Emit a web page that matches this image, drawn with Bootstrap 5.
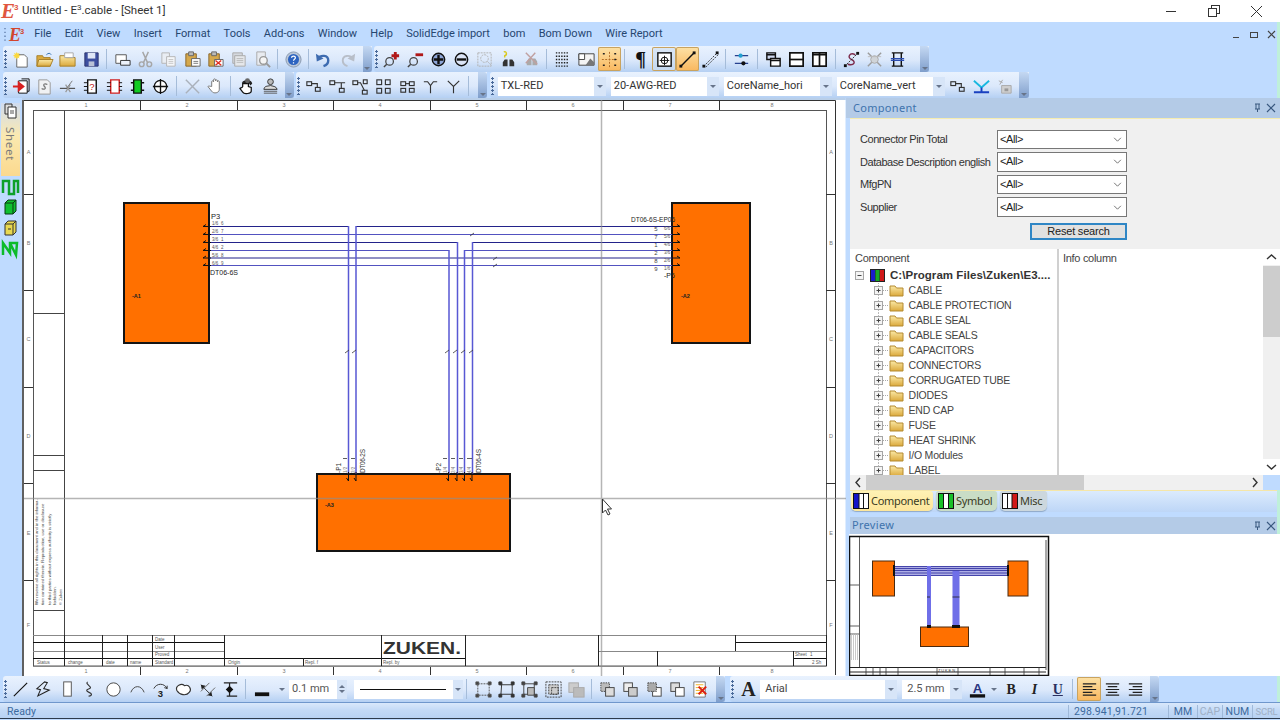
<!DOCTYPE html>
<html lang="en">
<head>
<meta charset="utf-8">
<title>Untitled - E3.cable - [Sheet 1]</title>
<link href="https://cdn.jsdelivr.net/npm/bootstrap@5.3.0/dist/css/bootstrap.min.css" rel="stylesheet">
<style>
html,body{width:1280px;height:720px;overflow:hidden;margin:0;background:#bfdbff}
body{font-family:Roboto,"Liberation Sans",sans-serif;font-size:11px;color:#222}
.app{width:1280px;height:720px}
.titlebar{height:22px;background:#fff;font-size:11.5px;color:#333;flex:none}
.logo{width:22px;height:22px;flex:none}
.winbtn{width:43px;display:flex;justify-content:center;align-items:center;height:19px}
.menubar{height:24px;background:#bfdbff;flex:none;padding-left:27.5px}
.menubar .mi{padding:0 6.65px;color:#26466f;font-size:11px;white-space:nowrap}
.mdi{width:45px;color:#3a5680;font-size:10px}
.tbrow{height:26px;background:#bfdbff;flex:none}
.tbar{height:26px;background:linear-gradient(#e9f2fe,#dbe8fb 55%,#b5d0f3);border-radius:3px 0 0 3px;flex:none}
.grip{width:6.5px;height:18px;flex:none;background:radial-gradient(circle at 1.5px 1.5px,#4a6a9a 1px,transparent 1.2px) 1px 0/3px 4px repeat-y}
.tbk{width:23.3px;height:24px;flex:none;display:flex;align-items:center;justify-content:center;border-radius:2px}
.tbk>svg{width:19px;height:19px}
.tbk.on{background:linear-gradient(#fde2a6,#f9b75e);box-shadow:inset 0 0 0 1px #c9a35f}
.tbk.on2{background:linear-gradient(#dbe7f5,#c4d8f0);box-shadow:inset 0 0 0 1px #c9a35f}
.tbsep{width:8px;height:20px;flex:none}
.tbsep::after{content:"";display:block;width:1px;height:20px;margin-left:3px;background:#a5bcd9}
.tbend{width:9px;height:26px;flex:none;background:linear-gradient(#c4d8f2,#7f9ecb);border-radius:0 3px 3px 0;display:flex;align-items:flex-end;justify-content:center;padding-bottom:2px}
.combo{height:19px;background:#fff;flex:none;font-size:11px;color:#333;padding-left:3px;white-space:nowrap;overflow:hidden}
.combo .drop{margin-left:auto;width:12px;height:19px;background:#d7e5f8;display:flex;align-items:center;justify-content:center;flex:none}
.tri{width:0;height:0;border-left:3px solid transparent;border-right:3px solid transparent;border-top:3px solid #67748a;display:block}
.shift .tbk,.shift .combo,.shift .grip,.shift .tbsep{margin-top:2px}
.mainrow{height:578px;flex:none}
.sidebar{width:22px;background:#bfdbff;flex:none}
.sheettab{width:19px;height:73px;margin:5px 0 0 1px;background:linear-gradient(#d0dcf0,#fbe9b0 45%,#fbd98e)}
.sheettab span{writing-mode:vertical-rl;font-family:"Noto Sans",sans-serif;font-size:11.5px;color:#7a7a7a;letter-spacing:.7px;display:block;margin:8px 0 0 1px}
.dwg{width:824px;height:578px;display:block;flex:none;background:#bfdbff}
.rpanel{width:434px;background:#bfdbff;flex:none;position:relative}
.phead{height:20px;background:#b4cbe7;color:#3f73ad;font-size:11px;padding:0 4px 0 7px;flex:none;letter-spacing:.3px;font-family:"Noto Sans",sans-serif}
.phead.second{height:17px;margin-left:4px;padding-left:2px}
.filters{height:131px;margin-left:4px;background:#f0f0f0;border-top:1px solid #f5ecb0;flex:none;padding:10.5px 0 0 10px;font-family:"Liberation Sans",sans-serif;font-size:11px;letter-spacing:-.45px;color:#333}
.frow{height:19.6px;margin-bottom:3px}
.frow label{width:137px;flex:none;white-space:nowrap}
.fsel.form-select{width:130px;height:19.6px;min-height:0;padding:0 0 0 2px;font-size:11px;letter-spacing:-.4px;line-height:1;border:1px solid #777;border-radius:0;background-position:right 3px center;background-size:11px 9px;background-image:url("data:image/svg+xml,%3csvg xmlns='http://www.w3.org/2000/svg' viewBox='0 0 16 16'%3e%3cpath fill='none' stroke='%23666' stroke-width='1.6' d='M2 5l6 6 6-6'/%3e%3c/svg%3e");color:#222;box-shadow:inset 0 0 0 1px #fff;font-family:"Liberation Sans",sans-serif}
.rbtn.btn{width:97px;height:17px;margin:6px 0 0 170px;padding:0;font-size:11px;letter-spacing:-.2px;line-height:1;border-radius:0;background:#e1e1e1;border:2px solid #2f86c5;color:#222;font-family:"Liberation Sans",sans-serif;display:block}
.treebox{height:226px;margin-left:4px;background:#fff;font-family:"Liberation Sans",sans-serif;font-size:10.5px;letter-spacing:-.2px;color:#444;flex:none}
.col1{width:207px;flex:none;overflow:hidden;border-right:2px solid #d0d0d0;box-sizing:content-box}
.col2{width:204px;flex:none}
.thead{height:19px;padding:0 0 1px 5px;color:#444;font-size:11px;letter-spacing:-.3px;flex:none}
.col2 .thead{padding-left:4px}
.trow{height:15px;white-space:nowrap;flex:none}
.trow.it{padding-left:21.5px}
.trow svg{flex:none}
.trootname{font-size:11.5px;letter-spacing:.05px;margin-left:2px;color:#333;font-weight:700}
.vscroll{width:17px;background:#f0f0f0;flex:none;position:relative}
.vscroll i{position:absolute;left:0;right:0;top:17px;height:71px;background:#cdcdcd}
.sarrow{height:16px;display:flex;align-items:center;justify-content:center;background:#fff}
.hrail{height:15px;margin-left:4px;margin-right:17px;background:#f0f0f0;flex:none;position:relative;color:#444}
.hrail i{position:absolute;left:16px;width:218px;top:0;bottom:0;background:#cdcdcd}
.tabs{height:22px;margin-left:4px;background:linear-gradient(#dcebfd,#bdd6f7);border-top:1px solid #f5e6a8;padding-left:1px;gap:3px;flex:none;font-size:11px;font-family:"Noto Sans",sans-serif;letter-spacing:-.3px}
.tabi{height:20px;border-radius:3px 3px 5px 5px;padding:0 0 0 2px;gap:2px;color:#3b3b1e;box-shadow:0 1px 1px #8ea8c7}
.tabi.a{width:82px;background:linear-gradient(#fff2b4,#fde69b)}
.tabi.b{width:61px;background:#c9ddc6}
.tabi.c{width:47px;background:#ccd7dd}
.gapb{height:5px;flex:none}
.prevpane{height:142px;margin-left:3px;background:#fff;flex:none}
.mini{width:201px;height:141px;display:block;margin-top:1px}
.botbar{height:27px;background:#bfdbff;flex:none;position:relative;border-bottom:1px solid #6f97cc}
.status{height:16px;flex:none;background:linear-gradient(#d9e8fb,#c2d9f6 50%,#b8d2f3);color:#3c6a9e;font-size:10.5px;border-bottom:1px solid #2c3a4c;padding:2px 0 0 7px;position:relative;letter-spacing:.1px}
.sc{border-left:1px solid #9fb9d9;text-align:center;height:13px;line-height:13px;flex:none;white-space:nowrap}
.edge{position:absolute;right:0;width:3px;background:#bff0da}
</style>
</head>
<body>
<svg width="0" height="0" class="position-absolute" aria-hidden="true">
<defs>
<linearGradient id="fo" x1="0" y1="0" x2="0" y2="1"><stop offset="0" stop-color="#fbe9a6"/><stop offset="1" stop-color="#dba93c"/></linearGradient>
<symbol id="new" viewBox="0 0 20 20"><path d="M5 5h8l3 3v10H5z" fill="#fff" stroke="#666"/><path d="M5 2l1 2 2-1-1 2 2 1-2 1 1 2-2-1-1 2-1-2-2 1 1-2-2-1 2-1-1-2 2 1z" fill="#fbd83c"/></symbol>
<symbol id="open" viewBox="0 0 20 20"><path d="M2 6h6l1 2h7v9H2z" fill="#d9a93f" stroke="#a77f2a"/><path d="M4 10h15l-3 7H2z" fill="url(#fo)" stroke="#a77f2a"/><path d="M12 5c2-2 4-2 5 0" fill="none" stroke="#2f6fb0"/></symbol>
<symbol id="fold" viewBox="0 0 20 20"><path d="M2 6h6l1 2h9v9H2z" fill="url(#fo)" stroke="#a77f2a"/><path d="M7 3h9v5H7z" fill="#fff" stroke="#aaa"/></symbol>
<symbol id="save" viewBox="0 0 20 20"><path d="M3 3h14v14H3z" fill="#3d4fa0" stroke="#2b336d"/><path d="M6 3h8v6H6z" fill="#dfe6f6"/><path d="M7 12h6v5H7z" fill="#b9c1d6"/></symbol>
<symbol id="win" viewBox="0 0 20 20"><path d="M3 5h11v9H3z" fill="#fff" stroke="#555"/><path d="M8 11h10v5H8z" fill="#eef3fb" stroke="#333"/></symbol>
<symbol id="cut" viewBox="0 0 20 20" fill="none" stroke="#a6a6a6" stroke-width="1.5"><path d="M7 2l5 11M13 2L8 13"/><circle cx="6" cy="15" r="2.5"/><circle cx="14" cy="15" r="2.5"/></symbol>
<symbol id="copy" viewBox="0 0 20 20"><path d="M3 3h8v11H3z" fill="#e9edf3" stroke="#b5b5b5"/><path d="M8 7h9v10H8z" fill="#f4f6f9" stroke="#b5b5b5"/><path d="M10 10h5M10 12h5M10 14h5" stroke="#c5c5c5"/></symbol>
<symbol id="paste" viewBox="0 0 20 20"><path d="M3 4h11v13H3z" fill="#d5a84c" stroke="#87652a"/><path d="M6 2h5v4H6z" fill="#bbb" stroke="#666"/><path d="M9 9h9v8H9z" fill="#fff" stroke="#666"/><path d="M11 12h5M11 14h5" stroke="#777"/></symbol>
<symbol id="paster" viewBox="0 0 20 20"><path d="M3 4h11v13H3z" fill="#d5a84c" stroke="#87652a"/><path d="M6 2h5v4H6z" fill="#bbb" stroke="#666"/><path d="M9 10h9v7H9z" fill="#fff" stroke="#666"/><path d="M10 16l6-5M10 11l6 5" stroke="#e03020" stroke-width="1.5"/></symbol>
<symbol id="stack" viewBox="0 0 20 20"><path d="M4 3h10v11H4z" fill="#d5d9df" stroke="#aaa"/><path d="M6 6h11v11H6z" fill="#e5e7ea" stroke="#aaa"/><path d="M8 9h7M8 11h7M8 13h7" stroke="#bbb"/></symbol>
<symbol id="docz" viewBox="0 0 20 20"><path d="M4 2h9v14H4z" fill="#e8ebf0" stroke="#aaa"/><circle cx="11" cy="11" r="4" fill="#f5f5f5" stroke="#999" stroke-width="1.5"/><path d="M14 14l4 4" stroke="#999" stroke-width="2"/></symbol>
<symbol id="help" viewBox="0 0 20 20"><circle cx="10" cy="10" r="8" fill="#b9c6d8" stroke="#8a9ab0"/><circle cx="10" cy="10" r="5.800" fill="#2c63c0"/><path d="M8 8.200c0-2.500 4-2.500 4 0 0 1.500-2 1.500-2 3M10 13v1.300" fill="none" stroke="#fff" stroke-width="1.300"/></symbol>
<symbol id="undo" viewBox="0 0 20 20"><path d="M4 9c3-4 11-4 11 2 0 3-2 5-5 6" fill="none" stroke="#3d6bb0" stroke-width="2.500"/><path d="M2 4l1 8 7-3z" fill="#3d6bb0"/></symbol>
<symbol id="redo" viewBox="0 0 20 20"><path d="M16 9c-3-4-11-4-11 2 0 3 2 5 5 6" fill="none" stroke="#b8bec8" stroke-width="2"/><path d="M18 4l-1 8-7-3z" fill="#b8bec8"/></symbol>
<symbol id="zp" viewBox="0 0 20 20"><circle cx="8" cy="12" r="4" fill="none" stroke="#444" stroke-width="1.300"/><path d="M5 15l-3 3" stroke="#444" stroke-width="1.500"/><path d="M14 2v8M10 6h8" stroke="#b01818" stroke-width="3"/></symbol>
<symbol id="zm" viewBox="0 0 20 20"><circle cx="8" cy="12" r="4" fill="none" stroke="#444" stroke-width="1.300"/><path d="M5 15l-3 3" stroke="#444" stroke-width="1.500"/><path d="M10 5h8" stroke="#b01818" stroke-width="3"/></symbol>
<symbol id="cp" viewBox="0 0 20 20"><circle cx="10" cy="10" r="6.500" fill="#8ea6d8" stroke="#111" stroke-width="1.500"/><path d="M10 5v10M5 10h10" stroke="#111" stroke-width="2.500"/></symbol>
<symbol id="cm" viewBox="0 0 20 20"><circle cx="10" cy="10" r="6.500" fill="#dbe4f6" stroke="#111" stroke-width="1.500"/><path d="M5 10h10" stroke="#111" stroke-width="2.500"/></symbol>
<symbol id="zf" viewBox="0 0 20 20" fill="none" stroke="#b0b0b0" stroke-dasharray="2 1"><rect x="3" y="3" width="14" height="14"/><circle cx="10" cy="9" r="4"/><path d="M13 12l4 4"/></symbol>
<symbol id="bin" viewBox="0 0 20 20"><path d="M6 10h3v7H4v-4zM11 10h3l2 3v4h-5z" fill="#333"/><path d="M5 2c3-1 4 3 1 4v2" fill="none" stroke="#d8c820" stroke-width="1.500"/></symbol>
<symbol id="binx" viewBox="0 0 20 20"><path d="M7 9h3v7H5v-4zM11 9h3l2 3v4h-5z" fill="#aaa"/><path d="M4 3l12 12M14 3L4 14" stroke="#c0a0a0" stroke-width="1.500"/></symbol>
<symbol id="dots" viewBox="0 0 20 20"><path d="M3 3h14M3 6.500h14M3 10h14M3 13.500h14M3 17h14" stroke="#222" stroke-width="1.500" stroke-dasharray="1.500 1.300"/></symbol>
<symbol id="img" viewBox="0 0 20 20"><path d="M2 4h16v12H2z" fill="#f4f4f4" stroke="#444"/><path d="M9 16l5-7 4 4v3z" fill="#777"/><path d="M2 4h6v6H2z" fill="#fff" stroke="#444"/></symbol>
<symbol id="snap" viewBox="0 0 20 20"><path d="M10 2v16M2 10h16" stroke="#b06a24" stroke-dasharray="2 1.500"/><path d="M3 4h2M15 4h2M3 16h2M15 16h2M15 10h2" stroke="#222" stroke-width="1.500"/></symbol>
<symbol id="box1" viewBox="0 0 20 20"><rect x="3" y="3" width="14" height="14" fill="#fff" stroke="#111" stroke-width="1.500"/><circle cx="10" cy="11" r="3.500" fill="none" stroke="#111"/><path d="M10 6v10M5 11h10" stroke="#111"/></symbol>
<symbol id="ln" viewBox="0 0 20 20"><path d="M3 17L17 3" stroke="#111" stroke-width="1.500"/><rect x="1.500" y="15.500" width="3" height="3" fill="#111"/><rect x="15.500" y="1.500" width="3" height="3" fill="#111"/></symbol>
<symbol id="lnd" viewBox="0 0 20 20"><path d="M3 17L17 3M5 18L18 5" stroke="#333" stroke-dasharray="2 1.300"/><rect x="1.500" y="15.500" width="3" height="3" fill="#111"/><rect x="15.500" y="1.500" width="3" height="3" fill="#111"/></symbol>
<symbol id="bl" viewBox="0 0 20 20"><path d="M3 6h14M3 14h14" stroke="#27408f" stroke-width="1.300"/><circle cx="9" cy="6" r="2.200" fill="#23a0d0"/><circle cx="12" cy="14" r="2.200" fill="#111"/></symbol>
<symbol id="wst" viewBox="0 0 20 20"><path d="M3 3h9v7H3z" fill="#cfd9f0" stroke="#111" stroke-width="1.500"/><path d="M7 9h10v8H7z" fill="#fff" stroke="#111" stroke-width="1.500"/><path d="M3 5h9M7 11h10" stroke="#111" stroke-width="1.500"/></symbol>
<symbol id="wh" viewBox="0 0 20 20"><rect x="3" y="3" width="14" height="14" fill="#fff" stroke="#111" stroke-width="1.800"/><path d="M3 10h14" stroke="#111" stroke-width="1.800"/></symbol>
<symbol id="wv" viewBox="0 0 20 20"><rect x="3" y="3" width="14" height="14" fill="#fff" stroke="#111" stroke-width="1.800"/><path d="M10 3v14M3 5h14" stroke="#111" stroke-width="1.800"/></symbol>
<symbol id="sg" viewBox="0 0 20 20"><path d="M14 5C8 2 5 8 10 10s3 7-4 5" fill="none" stroke="#7c2a4a" stroke-width="1.500"/><path d="M3 17L17 3" stroke="#333" stroke-dasharray="2 1"/><rect x="15" y="2" width="3" height="3" fill="#111"/><rect x="2" y="15" width="3" height="3" fill="#111"/></symbol>
<symbol id="xg" viewBox="0 0 20 20"><path d="M3 3l14 14M17 3L3 17" stroke="#9c9c9c" stroke-width="1.500"/><circle cx="10" cy="10" r="4" fill="#d0d4d8" stroke="#aaa"/><path d="M3 7h14" stroke="#bbb"/></symbol>
<symbol id="hfr" viewBox="0 0 20 20"><path d="M4 3h12M4 17h12M6 3v14M14 3v14" stroke="#111" stroke-width="1.500"/><path d="M3 9h14M3 11h14" stroke="#2b4cb0" stroke-width="1.300"/></symbol>
<symbol id="ra" viewBox="0 0 20 20"><path d="M7 4h9v13H7z" fill="#fff" stroke="#111"/><path d="M10 2h8v13h-2" fill="none" stroke="#111"/><path d="M1 10h6M7 6l5 4-5 4z" fill="#d82020" stroke="#d82020" stroke-width="2"/></symbol>
<symbol id="docs" viewBox="0 0 20 20"><path d="M4 3h9l3 3v12H4z" fill="#f0f1f3" stroke="#999"/><path d="M13 8c-3-2-5 0-3 2s0 4-3 2" fill="none" stroke="#777" stroke-width="1.300"/></symbol>
<symbol id="xl" viewBox="0 0 20 20"><path d="M2 12h16" stroke="#555" stroke-width="1.300"/><path d="M8 8l5 8M13 8l-5 8" stroke="#999" stroke-width="1.300"/><path d="M15 4l-6 8" stroke="#777"/></symbol>
<symbol id="q" viewBox="0 0 20 20"><path d="M6 3h9v14H6z" fill="#fff" stroke="#111" stroke-width="1.500"/><path d="M2 6h4M2 10h4M2 14h4" stroke="#111"/><text x="10.500" y="14" font-size="10" fill="#c02020" text-anchor="middle" font-family="Liberation Sans">?</text></symbol>
<symbol id="chipr" viewBox="0 0 20 20"><path d="M6 3h9v14H6z" fill="#fff" stroke="#d02020" stroke-width="1.500"/><path d="M2 6h4M2 10h4M2 14h4M15 6h3M15 10h3M15 14h3" stroke="#111"/></symbol>
<symbol id="chipg" viewBox="0 0 20 20"><path d="M6 3h8v14H6z" fill="#11cc22" stroke="#111" stroke-width="1.500"/><path d="M3 6h3M3 14h3M14 6h3M14 14h3" stroke="#111" stroke-width="1.500"/></symbol>
<symbol id="cross" viewBox="0 0 20 20"><circle cx="10" cy="10" r="6.500" fill="#fff" stroke="#111" stroke-width="1.400"/><path d="M10 2v16M2 10h16" stroke="#111" stroke-width="1.400"/></symbol>
<symbol id="bigx" viewBox="0 0 20 20"><path d="M3 3l14 14M17 3L3 17" stroke="#aab1bb" stroke-width="1.500"/></symbol>
<symbol id="hand" viewBox="0 0 20 20"><path d="M6 10V5a1 1 0 0 1 2 0V3a1 1 0 0 1 2 0v1a1 1 0 0 1 2 0v1a1 1 0 0 1 2 0v8c0 4-6 5-8 2l-4-5c1-1 3 0 4 0z" fill="#fff" stroke="#777"/></symbol>
<symbol id="handd" viewBox="0 0 20 20"><path d="M5 6c3-5 11-3 11 1l-2 2-1-2z" fill="#222"/><path d="M6 10V7h6v3l3 1v4c0 2-7 4-9 1l-3-4c1-1 2 0 3-2z" fill="#fff" stroke="#111" stroke-width="1.300"/><circle cx="11" cy="4" r="2.600" fill="#666"/></symbol>
<symbol id="pers" viewBox="0 0 20 20"><circle cx="10" cy="5" r="3" fill="#bbb" stroke="#333"/><path d="M3 13c1-4 3-3 7-4 4 1 6 1 7 4z" fill="#ddd" stroke="#333"/><path d="M3 15h14M3 17h14" stroke="#555"/></symbol>
<symbol id="l1" viewBox="0 0 20 20" fill="none" stroke="#333" stroke-width="1.200"><rect x="3" y="5" width="5" height="4"/><rect x="12" y="11" width="5" height="4"/><path d="M8 7h6v4"/></symbol>
<symbol id="l2" viewBox="0 0 20 20" fill="none" stroke="#333" stroke-width="1.200"><rect x="2" y="4" width="5" height="4"/><rect x="12" y="12" width="5" height="4"/><path d="M7 6h11M14 6v6"/></symbol>
<symbol id="l3" viewBox="0 0 20 20" fill="none" stroke="#333" stroke-width="1.200"><rect x="2" y="4" width="5" height="4"/><rect x="13" y="3" width="4" height="4"/><rect x="12" y="14" width="5" height="4"/><path d="M7 6h3l4 8"/></symbol>
<symbol id="l4" viewBox="0 0 20 20" fill="none" stroke="#333" stroke-width="1.200"><rect x="3" y="3" width="5" height="5"/><rect x="12" y="3" width="5" height="5"/><rect x="3" y="12" width="5" height="5"/><rect x="12" y="12" width="5" height="5"/></symbol>
<symbol id="l5" viewBox="0 0 20 20" fill="none" stroke="#333" stroke-width="1.200"><rect x="3" y="5" width="5" height="4"/><rect x="12" y="5" width="5" height="4"/><rect x="3" y="12" width="5" height="4"/><rect x="12" y="12" width="5" height="4"/><path d="M8 7h4"/></symbol>
<symbol id="y1" viewBox="0 0 20 20" fill="none" stroke="#333" stroke-width="1.200"><path d="M3 5h4l3 4 3-4h4M10 9v8"/></symbol>
<symbol id="y2" viewBox="0 0 20 20" fill="none" stroke="#333" stroke-width="1.200"><path d="M4 4l6 6 6-6M10 10v7"/></symbol>
<symbol id="cy" viewBox="0 0 20 20"><path d="M2 4l8 7 8-7" fill="none" stroke="#18b8e0" stroke-width="2"/><path d="M10 11v5M2 16h16" stroke="#1840c0" stroke-width="2"/></symbol>
<symbol id="gr" viewBox="0 0 20 20"><path d="M4 4l4 2M8 3l-3 5M7 9h10v8H7z" fill="#cfcfcf" stroke="#a9a9a9"/><path d="M10 12h4v3h-4z" fill="#999"/></symbol>
<symbol id="dl" viewBox="0 0 20 20"><path d="M3 17L17 3" stroke="#111" stroke-width="1.200"/></symbol>
<symbol id="zz" viewBox="0 0 20 20" fill="none" stroke="#222" stroke-width="1.100"><path d="M9 2L3 11h4l-1 7 10-9h-6l2-7z" transform="rotate(15 10 10)"/></symbol>
<symbol id="rc" viewBox="0 0 20 20"><rect x="6" y="2" width="8" height="15" fill="#fff" stroke="#555"/></symbol>
<symbol id="sq" viewBox="0 0 20 20" fill="none" stroke="#333" stroke-width="1.200"><path d="M7 2c-3 2 3 4 3 6s-4 1-4 3 5 2 5 4-2 2-3 2"/></symbol>
<symbol id="cir" viewBox="0 0 20 20"><circle cx="10" cy="10" r="7" fill="#fff" stroke="#444"/></symbol>
<symbol id="arc" viewBox="0 0 20 20"><path d="M3 13c3-8 11-8 14 0" fill="none" stroke="#444"/></symbol>
<symbol id="arc3" viewBox="0 0 20 20"><path d="M3 9c3-6 11-6 14 0" fill="none" stroke="#333"/><path d="M14 8l3 1 0-3" fill="none" stroke="#333"/><text x="10" y="18" font-size="10" font-weight="700" font-family="Liberation Sans" text-anchor="middle" fill="#222">3</text></symbol>
<symbol id="cl" viewBox="0 0 20 20"><path d="M3 11c-2-5 5-8 8-5 5-2 8 4 5 7-3 4-10 3-13-2z" fill="#fff" stroke="#333" stroke-width="1.200"/></symbol>
<symbol id="dm" viewBox="0 0 20 20"><path d="M3 5l12 12" stroke="#333"/><path d="M3 5l5 1-4 4zM15 17l-5-1 4-4z" fill="#222"/><path d="M3 12L12 3M9 17l9-9" stroke="#666"/></symbol>
<symbol id="dv" viewBox="0 0 20 20"><path d="M3 3h14M6 17h11M9 3v14" stroke="#222" stroke-width="1.300"/><path d="M9 6L5 10h8zM9 14l-4-4h8z" fill="#111"/></symbol>
<symbol id="lw" viewBox="0 0 20 20"><rect x="1" y="13" width="15" height="4" fill="#111"/></symbol>
<symbol id="g1" viewBox="0 0 20 20" fill="none" stroke="#555"><rect x="4" y="4" width="12" height="12" stroke-dasharray="2 1"/><path d="M2 2h3v3H2zM15 2h3v3h-3zM2 15h3v3H2zM15 15h3v3h-3z" fill="#444"/></symbol>
<symbol id="g2" viewBox="0 0 20 20" fill="none" stroke="#333"><path d="M5 3l-1 14M16 3v14M3 5h14M3 15h14"/><path d="M2 2h3v3H2zM15 2h3v3h-3zM2 15h3v3H2zM15 15h3v3h-3z" fill="#333"/></symbol>
<symbol id="g3" viewBox="0 0 20 20" fill="none" stroke="#444"><rect x="4" y="4" width="11" height="11"/><path d="M8 8h7v8H8z" fill="#bbb"/><path d="M2 2h3v3H2zM15 2h3v3h-3zM2 15h3v3H2zM15 15h3v3h-3z" fill="#444"/></symbol>
<symbol id="g4" viewBox="0 0 20 20" fill="none" stroke="#444" stroke-dasharray="2 1"><rect x="2" y="2" width="16" height="16"/><rect x="5" y="5" width="10" height="10" fill="#ccc"/><path d="M8 8h7v7H8z"/></symbol>
<symbol id="g5" viewBox="0 0 20 20" fill="#ccc" stroke="#aaa"><rect x="2" y="3" width="10" height="10"/><rect x="7" y="8" width="11" height="10" fill="#bbb"/></symbol>
<symbol id="o1" viewBox="0 0 20 20"><rect x="3" y="3" width="9" height="9" fill="#bbb" stroke="#444" stroke-dasharray="1.500 1"/><rect x="8" y="8" width="9" height="9" fill="#ddd" stroke="#444"/></symbol>
<symbol id="o2" viewBox="0 0 20 20"><rect x="3" y="3" width="9" height="9" fill="#eee" stroke="#444"/><rect x="8" y="8" width="9" height="9" fill="#ccc" stroke="#444"/></symbol>
<symbol id="o3" viewBox="0 0 20 20"><rect x="8" y="8" width="9" height="9" fill="#fff" stroke="#444"/><rect x="3" y="3" width="9" height="9" fill="#aaa" stroke="#444" stroke-dasharray="1.500 1"/></symbol>
<symbol id="o4" viewBox="0 0 20 20"><rect x="3" y="3" width="9" height="9" fill="#ddd" stroke="#444"/><rect x="8" y="8" width="9" height="9" fill="#fff" stroke="#444"/></symbol>
<symbol id="edt" viewBox="0 0 20 20"><path d="M3 2h12v16H3z" fill="#fff" stroke="#777"/><path d="M5 5h8M5 8h8M5 11h8M5 14h8" stroke="#f0b020"/><path d="M8 7l8 8M16 7l-8 8" stroke="#dd2010" stroke-width="2"/></symbol>
<symbol id="lt" viewBox="0 0 20 20"><path d="M3 4h14M3 7h10M3 10h14M3 13h10M3 16h14" stroke="#222" stroke-width="1.300"/></symbol>
<symbol id="ct" viewBox="0 0 20 20"><path d="M3 4h14M5 7h10M3 10h14M5 13h10M3 16h14" stroke="#222" stroke-width="1.300"/></symbol>
<symbol id="rt" viewBox="0 0 20 20"><path d="M3 4h14M7 7h10M3 10h14M7 13h10M3 16h14" stroke="#222" stroke-width="1.300"/></symbol>
<symbol id="tree" viewBox="0 0 37 15"><path d="M6.500 0v15" stroke="#bbb" stroke-dasharray="1 1"/><path d="M11 7.500h5" stroke="#aaa" stroke-dasharray="1 1"/><rect x="2.500" y="3.500" width="8" height="8" fill="#f4f4f4" stroke="#a5a5a5"/><path d="M4.500 7.500h4M6.500 5.500v4" stroke="#444"/><path d="M18 3h5l1.500 2H31v8H18z" fill="url(#fo)" stroke="#b48a30"/></symbol>
</defs>
</svg>
<div class="app d-flex flex-column">
  <div class="titlebar d-flex align-items-center">
    <svg class="logo" viewBox="0 0 22 22"><text x="1" y="18" font-family="Liberation Serif" font-style="italic" font-weight="700" font-size="21" fill="#e0563f">E</text><text x="14" y="10" font-family="Liberation Sans" font-weight="700" font-size="8" fill="#e0563f">3</text></svg>
    <span class="text-nowrap">Untitled - E<sup style="font-size:8px">3</sup>.cable - [Sheet 1]</span>
    <div class="ms-auto d-flex" style="margin-right:2px">
      <span class="winbtn"><svg width="12" height="12"><path d="M1 6.500h10" stroke="#333"/></svg></span>
      <span class="winbtn"><svg width="12" height="12" fill="#fff" stroke="#333"><rect x="3.500" y=".5" width="8" height="8"/><rect x=".5" y="3.500" width="8" height="8"/></svg></span>
      <span class="winbtn"><svg width="13" height="13"><path d="M1 1l11 11M12 1L1 12" stroke="#333"/></svg></span>
    </div>
  </div>
  <div class="menubar d-flex align-items-center position-relative">
    <svg class="position-absolute" style="left:3px;top:2px" width="24" height="20" viewBox="0 0 24 20"><path d="M2 4v14" stroke="#5a78a5" stroke-width="1.300" stroke-dasharray="1.300 2.500"/><text x="6" y="17" font-family="Liberation Serif" font-style="italic" font-weight="700" font-size="18" fill="#d2452e">E</text><text x="17" y="10" font-family="Liberation Sans" font-weight="700" font-size="7.500" fill="#d2452e">3</text></svg>
    <span class="mi">File</span><span class="mi">Edit</span><span class="mi">View</span><span class="mi">Insert</span><span class="mi">Format</span><span class="mi">Tools</span><span class="mi">Add-ons</span><span class="mi">Window</span><span class="mi">Help</span><span class="mi">SolidEdge import</span><span class="mi">bom</span><span class="mi">Bom Down</span><span class="mi">Wire Report</span>
    <div class="ms-auto d-flex justify-content-between align-items-center mdi" style="margin-right:3px">
      <svg width="9" height="9"><path d="M1 7.500h6" stroke="#444"/></svg>
      <svg width="10" height="9" fill="none" stroke="#444"><rect x="1.500" y="2.500" width="7" height="5"/></svg>
      <svg width="10" height="9"><path d="M1 1l7 7M8 1L1 8" stroke="#444" stroke-width="1.200"/></svg>
    </div>
    <span class="edge" style="top:0;bottom:-52px"></span>
  </div>
  <div class="tbrow d-flex">
    <div class="tbar d-flex align-items-center" style="margin-left:3px">
      <span class="grip"></span>
      <span class="tbk"><svg><use href="#new"/></svg></span><span class="tbk"><svg><use href="#open"/></svg></span><span class="tbk"><svg><use href="#fold"/></svg></span><span class="tbk"><svg><use href="#save"/></svg></span>
      <span class="tbsep"></span>
      <span class="tbk"><svg><use href="#win"/></svg></span><span class="tbk"><svg><use href="#cut"/></svg></span><span class="tbk"><svg><use href="#copy"/></svg></span><span class="tbk"><svg><use href="#paste"/></svg></span><span class="tbk"><svg><use href="#paster"/></svg></span><span class="tbk"><svg><use href="#stack"/></svg></span><span class="tbk"><svg><use href="#docz"/></svg></span>
      <span class="tbsep"></span>
      <span class="tbk"><svg><use href="#help"/></svg></span>
      <span class="tbsep" style="width:7px"></span>
      <span class="tbk"><svg><use href="#undo"/></svg></span><span class="tbk"><svg><use href="#redo"/></svg></span>
      <span class="tbend" style="margin-left:4px"><span class="tri"></span></span>
    </div>
    <div class="tbar d-flex align-items-center" style="margin-left:2px">
      <span class="grip"></span>
      <span class="tbk"><svg><use href="#zp"/></svg></span><span class="tbk"><svg><use href="#zm"/></svg></span><span class="tbk"><svg><use href="#cp"/></svg></span><span class="tbk"><svg><use href="#cm"/></svg></span><span class="tbk"><svg><use href="#zf"/></svg></span><span class="tbk"><svg><use href="#bin"/></svg></span><span class="tbk"><svg><use href="#binx"/></svg></span>
      <span class="tbsep"></span>
      <span class="tbk"><svg><use href="#dots"/></svg></span><span class="tbk"><svg><use href="#img"/></svg></span><span class="tbk on"><svg><use href="#snap"/></svg></span>
      <span class="tbsep"></span>
      <span class="tbk fs-5 fw-bold" style="color:#111;font-family:'Liberation Serif',serif">¶</span><span class="tbk on2"><svg><use href="#box1"/></svg></span><span class="tbk on"><svg><use href="#ln"/></svg></span><span class="tbk"><svg><use href="#lnd"/></svg></span>
      <span class="tbsep"></span>
      <span class="tbk"><svg><use href="#bl"/></svg></span>
      <span class="tbsep"></span>
      <span class="tbk"><svg><use href="#wst"/></svg></span><span class="tbk"><svg><use href="#wh"/></svg></span><span class="tbk"><svg><use href="#wv"/></svg></span>
      <span class="tbsep"></span>
      <span class="tbk"><svg><use href="#sg"/></svg></span><span class="tbk"><svg><use href="#xg"/></svg></span><span class="tbk"><svg><use href="#hfr"/></svg></span>
      <span class="tbend" style="margin-left:11px"><span class="tri"></span></span>
    </div>
  </div>
  <div class="tbrow d-flex shift">
    <div class="tbar d-flex align-items-center" style="margin-left:3px">
      <span class="grip"></span>
      <span class="tbk"><svg><use href="#ra"/></svg></span><span class="tbk"><svg><use href="#docs"/></svg></span><span class="tbk"><svg><use href="#xl"/></svg></span><span class="tbk"><svg><use href="#q"/></svg></span><span class="tbk"><svg><use href="#chipr"/></svg></span><span class="tbk"><svg><use href="#chipg"/></svg></span><span class="tbk"><svg><use href="#cross"/></svg></span>
      <span class="tbsep"></span>
      <span class="tbk"><svg><use href="#bigx"/></svg></span><span class="tbk"><svg><use href="#hand"/></svg></span>
      <span class="tbsep"></span>
      <span class="tbk"><svg><use href="#handd"/></svg></span><span class="tbk"><svg><use href="#pers"/></svg></span>
      <span class="tbend" style="margin-left:3px"><span class="tri"></span></span>
    </div>
    <div class="tbar d-flex align-items-center" style="margin-left:2px">
      <span class="grip"></span>
      <span class="tbk"><svg><use href="#l1"/></svg></span><span class="tbk"><svg><use href="#l2"/></svg></span><span class="tbk"><svg><use href="#l3"/></svg></span><span class="tbk"><svg><use href="#l4"/></svg></span><span class="tbk"><svg><use href="#l5"/></svg></span><span class="tbk"><svg><use href="#y1"/></svg></span><span class="tbk"><svg><use href="#y2"/></svg></span>
      <span class="tbsep"></span>
      <span class="tbend" style="margin-left:5px"><span class="tri"></span></span>
    </div>
    <div class="tbar d-flex align-items-center" style="margin-left:2.400px">
      <span class="grip"></span>
      <div class="d-flex align-items-center" style="gap:5px;margin-left:1.500px">
        <div class="combo d-flex align-items-center" style="width:108px">TXL-RED<span class="drop"><span class="tri"></span></span></div>
        <div class="combo d-flex align-items-center" style="width:108px">20-AWG-RED<span class="drop"><span class="tri"></span></span></div>
        <div class="combo d-flex align-items-center" style="width:108px">CoreName_hori<span class="drop"><span class="tri"></span></span></div>
        <div class="combo d-flex align-items-center" style="width:108px">CoreName_vert<span class="drop"><span class="tri"></span></span></div>
      </div>
      <span class="tbk" style="margin-left:1.400px"><svg><use href="#l1"/></svg></span><span class="tbk"><svg><use href="#cy"/></svg></span><span class="tbk"><svg><use href="#gr"/></svg></span>
      <span class="tbend" style="margin-left:3px;width:10px"><span class="tri"></span></span>
    </div>
  </div>
  <div class="mainrow d-flex">
    <div class="sidebar d-flex flex-column align-items-start">
      <div class="sheettab">
        <svg class="d-block mx-auto" width="15" height="16" viewBox="0 0 15 16"><path d="M2 1h7v10H2z" fill="#ddd" stroke="#333"/><path d="M5 4h8v11H5z" fill="#fff" stroke="#333"/><path d="M7 8h4M7 10h4" stroke="#555"/></svg>
        <span>Sheet</span>
      </div>
      <svg class="d-block" style="margin-top:2px" width="22" height="84" viewBox="0 0 22 84">
        <path d="M3 15V3h6v13h5V3h4v12" fill="none" stroke="#0da02a" stroke-width="2.500"/>
        <path d="M5 25l3-3h8v11l-3 3H5z" fill="#10c030" stroke="#0a3a12"/><path d="M5 25h8v11M13 25l3-3" fill="none" stroke="#0a3a12"/>
        <path d="M5 46l3-3h8v11l-3 3H5z" fill="#e8d850" stroke="#333"/><path d="M5 46h8v11M13 46l3-3M8 51h3" fill="none" stroke="#333"/>
        <path d="M3 77V65l7 10V65h7l-1 12-6-12" fill="none" stroke="#0dbb2a" stroke-width="2.500"/>
      </svg>
    </div>
    <svg class="dwg" viewBox="22 98 824 578" xmlns="http://www.w3.org/2000/svg" font-family="Liberation Sans">
      <rect x="22" y="98" width="824" height="2.500" fill="#b9cfe9"/>
      <rect x="22" y="100" width="824" height="576" fill="#fff"/>
      <path d="M23 100V676" stroke="#2b2b2b" stroke-width="1.500"/>
      <path d="M24 100.500H835.500V675" fill="none" stroke="#333"/>
      <path d="M846 98V676" stroke="#bfdbff"/>
      <rect x="33.500" y="110.500" width="793" height="555.500" fill="none" stroke="#555"/>
      <g stroke="#333"><path d="M140.500 100v10M237.500 100v10M333.500 100v10M430.500 100v10M526.500 100v10M623.500 100v10M719.500 100v10"/><path d="M140.500 666v9M237.500 666v9M333.500 666v9M430.500 666v9M526.500 666v9M623.500 666v9M719.500 666v9"/><path d="M24 194.500h9M24 290.500h9M24 387.500h9M24 483.500h9M24 580.500h9M826 194.500h9M826 290.500h9M826 387.500h9M826 483.500h9M826 580.500h9"/></g>
      <g font-size="5.500" fill="#777" text-anchor="middle"><text x="86" y="107">1</text><text x="187" y="107">2</text><text x="284" y="107">3</text><text x="380" y="107">4</text><text x="477" y="107">5</text><text x="573" y="107">6</text><text x="670" y="107">7</text><text x="772" y="107">8</text><text x="86" y="673">1</text><text x="187" y="673">2</text><text x="284" y="673">3</text><text x="380" y="673">4</text><text x="477" y="673">5</text><text x="573" y="673">6</text><text x="670" y="673">7</text><text x="772" y="673">8</text><text x="28.500" y="154">A</text><text x="28.500" y="245">B</text><text x="28.500" y="341">C</text><text x="28.500" y="438">D</text><text x="28.500" y="535">E</text><text x="28.500" y="627">F</text><text x="831" y="154">A</text><text x="831" y="245">B</text><text x="831" y="341">C</text><text x="831" y="438">D</text><text x="831" y="535">E</text><text x="831" y="627">F</text></g>
      <g fill="none" stroke="#444"><path d="M64.500 110.500V635M33.500 313.500h31M33.500 455.500h31M33.500 470.500h31M33.500 610.500h31"/></g>
      <g font-size="4.200" fill="#444"><text transform="translate(38 605) rotate(-90)">We reserve all rights in this document and in the informa-</text><text transform="translate(44 605) rotate(-90)">tion contained therein. Reproduction, use or disclosure</text><text transform="translate(50.500 605) rotate(-90)">to third parties without express authority is strictly</text><text transform="translate(55.500 605) rotate(-90)">forbidden.</text><text transform="translate(62 605) rotate(-90)">© Zuken</text></g>
      <path d="M33 635.500h793M33 651.500h191M598 651.500h228M33 666.500h793" stroke="#888" fill="none"/>
      <path d="M33 642.500h191M33 658.500h432M735 642.500h91M793 658.500h33" stroke="#111" fill="none"/>
      <path d="M64.500 635v31M102.500 635v31M127.500 635v31M152.500 635v31M174.500 635v31M224.500 635v31M303.500 658v8M381.500 635v31M465.500 635v31M598.500 635v31M657.500 651v15M735.500 635v16M793.500 651v15M826.500 635v31" stroke="#222" fill="none"/>
      <g font-size="4.500" fill="#555"><text x="37" y="664">Status</text><text x="68" y="664">change</text><text x="106" y="664">date</text><text x="130" y="664">name</text><text x="155" y="664">Standard</text><text x="228" y="664">Origin</text><text x="305" y="664">Repl. f</text><text x="383" y="664">Repl. by</text><text x="155" y="641">Date</text><text x="155" y="649">User</text><text x="155" y="656">Proved</text><text x="795" y="656">Sheet</text><text x="810" y="656">1</text><text x="812" y="664">2 Sh</text></g>
      <text x="383" y="654" font-size="17" font-weight="700" fill="#333" textLength="78" lengthAdjust="spacingAndGlyphs">ZUKEN.</text>
      <g fill="#ff7000" stroke="#141414" stroke-width="2"><rect x="124" y="203" width="85" height="140"/><rect x="672" y="203" width="78" height="140"/><rect x="317" y="474" width="193" height="77"/></g>
      <g fill="none" stroke="#23238a" stroke-width="1.100">
        <path d="M209 226.500H348.500M672 226.500H356"/><path d="M209 242.500H457.500M672 242.500H472.500"/><path d="M209 258H672"/>
      </g>
      <g fill="none" stroke="#5252c0" stroke-width="1.200">
        <path d="M209 234.500H672"/><path d="M209 250.500H449M672 250.500H464.500"/><path d="M209 265.500H672"/>
      </g>
      <path d="M348.500 226V474M356 226V474M449 250V474M457.500 242V474M464.500 250V474M472.500 242V474" fill="none" stroke="#5858d4" stroke-width="1.500"/>
      <g stroke="#111" fill="none" stroke-width="1"><path d="M211 226.500h-8l3-2M211 234.500h-8l3-2M211 242.500h-8l3-2M211 250.500h-8l3-2M211 258h-8l3-2M211 265.500h-8l3-2M672 226.500h8l-3-2M672 234.500h8l-3-2M672 242.500h8l-3-2M672 250.500h8l-3-2M672 258h8l-3-2M672 265.500h8l-3-2M348.500 472v9l-2-3M356 472v9l-2-3M448.500 472v9l-2-3M457 472v9l-2-3M464.500 472v9l-2-3M472 472v9l-2-3"/></g>
      <g stroke="#333" fill="none" stroke-width=".8"><path d="M345 353l4-3M352 353l4-3M445 353l4-3M453 353l4-3M461 353l4-3M469 353l4-3M470 236l4-3M493 260l4-3M493 267l4-3"/></g>
      <g font-size="6.500" fill="#222"><text x="211" y="218.500" font-size="7.500">P3</text><text x="210" y="275" font-size="7">DT06-6S</text><text x="631" y="221.500" font-size="7" textLength="44" lengthAdjust="spacingAndGlyphs">DT06-6S-EP06</text><text x="132" y="298" font-weight="700" font-size="5.500">-A1</text><text x="681" y="298" font-weight="700" font-size="5.500">-A2</text><text x="325" y="506.500" font-weight="700" font-size="5.500">-A3</text><text x="664" y="278" font-size="7">-P6</text></g>
      <g font-size="6" fill="#444" text-anchor="middle"><text x="656" y="231">5</text><text x="656" y="239">7</text><text x="656" y="247">1</text><text x="656" y="255">2</text><text x="656" y="263">8</text><text x="656" y="271">9</text></g>
      <g font-size="4.500" fill="#555"><text x="664" y="230">6/6</text><text x="664" y="238">5/6</text><text x="664" y="246">4/6</text><text x="664" y="254">3/6</text><text x="664" y="262">2/6</text><text x="664" y="270">1/6</text><text x="212" y="225">1/6</text><text x="212" y="233">2/6</text><text x="212" y="241">3/6</text><text x="212" y="249">4/6</text><text x="212" y="257">5/6</text><text x="212" y="265">6/6</text><text x="221" y="225">6</text><text x="221" y="233">7</text><text x="221" y="241">1</text><text x="221" y="249">2</text><text x="221" y="257">8</text><text x="221" y="265">9</text></g>
      <g font-size="6.500" fill="#333"><text transform="translate(341 473) rotate(-90)">-P1</text><text transform="translate(441 473) rotate(-90)">-P2</text><text transform="translate(365 473) rotate(-90)" textLength="24">DT06-2S</text><text transform="translate(481 473) rotate(-90)" textLength="24">DT06-4S</text></g>
      <g font-size="4.500" fill="#777"><text transform="translate(347 473) rotate(-90)">1/2</text><text transform="translate(355 473) rotate(-90)">2/2</text><text transform="translate(447 473) rotate(-90)">1/4</text><text transform="translate(455 473) rotate(-90)">2/4</text><text transform="translate(463 473) rotate(-90)">3/4</text><text transform="translate(471 473) rotate(-90)">4/4</text></g>
      <path d="M343 458.500h4M351 458.500h4M443 458.500h4M451 458.500h4M459 458.500h4M467 458.500h5" stroke="#333" stroke-width=".8"/>
      <path d="M601.500 100V676M24 498.500H846" stroke="#8d8d8d" stroke-opacity=".65" stroke-width="1.500"/>
      <path d="M602.500 499v14l3-3 2.500 5 2-1-2.500-5h4z" fill="#fff" stroke="#333"/>
    </svg>
    <div class="rpanel d-flex flex-column">
      <div class="phead d-flex align-items-center"><span>Component</span>
        <svg class="ms-auto" width="24" height="12" viewBox="0 0 24 12"><path d="M3 2h5M4 2v5M7 2v5M3 7h5M5.500 7v3" stroke="#39587f" fill="none"/><path d="M15 2l8 8M23 2l-8 8" stroke="#39587f" stroke-width="1.200"/></svg>
      </div>
      <div class="filters">
        <div class="frow d-flex align-items-center"><label for="s1">Connector Pin Total</label><select id="s1" class="form-select fsel"><option>&lt;All&gt;</option></select></div>
        <div class="frow d-flex align-items-center"><label for="s2">Database Description english</label><select id="s2" class="form-select fsel"><option>&lt;All&gt;</option></select></div>
        <div class="frow d-flex align-items-center"><label for="s3">MfgPN</label><select id="s3" class="form-select fsel"><option>&lt;All&gt;</option></select></div>
        <div class="frow d-flex align-items-center"><label for="s4">Supplier</label><select id="s4" class="form-select fsel"><option>&lt;All&gt;</option></select></div>
        <button type="button" class="btn rbtn">Reset search</button>
      </div>
      <div class="treebox d-flex">
        <div class="col1 d-flex flex-column">
          <div class="thead d-flex align-items-center">Component</div>
          <div class="trow d-flex align-items-center"><svg width="38" height="15" viewBox="0 0 38 15"><rect x="5.500" y="3.500" width="8" height="8" fill="#f4f4f4" stroke="#a5a5a5"/><path d="M7.500 7.500h4" stroke="#444"/><rect x="20" y="1" width="15" height="13" fill="#222"/><rect x="21" y="2" width="4" height="11" fill="#1a1acc"/><rect x="25.500" y="2" width="4" height="11" fill="#18a828"/><rect x="30" y="2" width="4" height="11" fill="#d01818"/></svg><span class="trootname">C:\Program Files\Zuken\E3....</span></div>
          <div class="trow it d-flex align-items-center"><svg width="37" height="15"><use href="#tree"/></svg><span>CABLE</span></div>
          <div class="trow it d-flex align-items-center"><svg width="37" height="15"><use href="#tree"/></svg><span>CABLE PROTECTION</span></div>
          <div class="trow it d-flex align-items-center"><svg width="37" height="15"><use href="#tree"/></svg><span>CABLE SEAL</span></div>
          <div class="trow it d-flex align-items-center"><svg width="37" height="15"><use href="#tree"/></svg><span>CABLE SEALS</span></div>
          <div class="trow it d-flex align-items-center"><svg width="37" height="15"><use href="#tree"/></svg><span>CAPACITORS</span></div>
          <div class="trow it d-flex align-items-center"><svg width="37" height="15"><use href="#tree"/></svg><span>CONNECTORS</span></div>
          <div class="trow it d-flex align-items-center"><svg width="37" height="15"><use href="#tree"/></svg><span>CORRUGATED TUBE</span></div>
          <div class="trow it d-flex align-items-center"><svg width="37" height="15"><use href="#tree"/></svg><span>DIODES</span></div>
          <div class="trow it d-flex align-items-center"><svg width="37" height="15"><use href="#tree"/></svg><span>END CAP</span></div>
          <div class="trow it d-flex align-items-center"><svg width="37" height="15"><use href="#tree"/></svg><span>FUSE</span></div>
          <div class="trow it d-flex align-items-center"><svg width="37" height="15"><use href="#tree"/></svg><span>HEAT SHRINK</span></div>
          <div class="trow it d-flex align-items-center"><svg width="37" height="15"><use href="#tree"/></svg><span>I/O Modules</span></div>
          <div class="trow it d-flex align-items-center"><svg width="37" height="15"><use href="#tree"/></svg><span>LABEL</span></div>
        </div>
        <div class="col2"><div class="thead d-flex align-items-center">Info column</div></div>
        <div class="vscroll d-flex flex-column justify-content-between"><i></i>
          <span class="sarrow"><svg width="11" height="8"><path d="M1 6l4.500-4L10 6" fill="none" stroke="#333" stroke-width="1.400"/></svg></span>
          <span class="sarrow"><svg width="11" height="8"><path d="M1 2l4.500 4L10 2" fill="none" stroke="#333" stroke-width="1.400"/></svg></span>
        </div>
      </div>
      <div class="hrail d-flex justify-content-between align-items-center"><i></i>
        <svg class="ms-1" width="8" height="11"><path d="M6 1L2 5.500 6 10" fill="none" stroke="#333" stroke-width="1.400"/></svg>
        <svg class="me-1" width="8" height="11"><path d="M2 1l4 4.500L2 10" fill="none" stroke="#333" stroke-width="1.400"/></svg>
      </div>
      <div class="tabs d-flex align-items-start">
        <div class="tabi a d-flex align-items-center"><svg width="16" height="16"><rect x=".5" y=".5" width="15" height="15" fill="#fff" stroke="#111"/><rect x="1" y="1" width="5" height="14" fill="#1414c8"/><path d="M6 1v14M10.500 1v14" stroke="#111"/></svg>Component</div>
        <div class="tabi b d-flex align-items-center"><svg width="16" height="16"><rect x=".5" y=".5" width="15" height="15" fill="#18c028" stroke="#111"/><rect x="6" y="1" width="4" height="14" fill="#fff"/><path d="M5.500 1v14M10.500 1v14" stroke="#111"/></svg>Symbol</div>
        <div class="tabi c d-flex align-items-center"><svg width="16" height="16"><rect x=".5" y=".5" width="15" height="15" fill="#fff" stroke="#111"/><rect x="10" y="1" width="5" height="14" fill="#d01818"/><path d="M5.500 1v14M10 1v14" stroke="#111"/></svg>Misc</div>
      </div>
      <div class="gapb"></div>
      <div class="phead second d-flex align-items-center"><span>Preview</span>
        <svg class="ms-auto" width="24" height="12" viewBox="0 0 24 12"><path d="M3 2h5M4 2v5M7 2v5M3 7h5M5.500 7v3" stroke="#39587f" fill="none"/><path d="M15 2l8 8M23 2l-8 8" stroke="#39587f" stroke-width="1.200"/></svg>
      </div>
      <div class="prevpane">
        <svg class="mini" viewBox="849 535 201 141">
          <rect x="849.500" y="536.500" width="199" height="139" fill="#fff" stroke="#111" stroke-width="1.500"/>
          <path d="M859.500 537V667M850 585h9M850 626h9M850 634h9" stroke="#333" fill="none" stroke-width=".8"/>
          <path d="M851.500 634V660M853.500 634V660M855.500 634V660M857.500 634V660" stroke="#bbb" stroke-width=".8"/>
          <path d="M850 667.500h196M850 672h196" stroke="#222"/>
          <path d="M866 667v8M873 667v8M880 667v8M886 667v8M898 667v8M937 667v8M958 667v8M990 667v8M1005 667v8M1024 667v8M1039 667v8" stroke="#333" stroke-width=".8"/>
          <text x="938" y="672" font-family="Liberation Sans" font-size="4" fill="#333" textLength="19">ZUKEN.</text>
          <path d="M1046 540v130" stroke="#555"/>
          <g fill="#ff7000" stroke="#4a2a10" stroke-width="1"><rect x="872.500" y="561" width="22" height="35"/><rect x="1008" y="561" width="20" height="35"/><rect x="920.500" y="627" width="48" height="19.500"/></g>
          <rect x="894" y="566" width="114" height="10" fill="#6a6ad0" fill-opacity=".55"/>
          <path d="M894 566.500h114M894 568.500h114M894 570.500h114M894 573h114M894 575.500h114" stroke="#2a2a9c" stroke-width=".8"/>
          <rect x="927" y="566" width="4" height="61" fill="#6f6fe8"/>
          <rect x="952.500" y="571" width="7" height="56" fill="#6f6fe8"/>
          <path d="M952.500 597h7M927 597h3" stroke="#222" stroke-width=".8"/>
          <rect x="893" y="565" width="2" height="11" fill="#111"/><rect x="1007" y="565" width="2" height="11" fill="#111"/><rect x="927" y="625" width="4" height="3" fill="#111"/><rect x="952" y="625" width="8" height="3" fill="#111"/>
        </svg>
      </div>
      <span class="edge" style="top:392px;height:44px"></span>
    </div>
  </div>
  <div class="botbar d-flex">
    <div class="tbar d-flex align-items-center" style="margin-left:3px">
      <span class="grip" style="width:6px"></span>
      <span class="tbk"><svg><use href="#dl"/></svg></span><span class="tbk"><svg><use href="#zz"/></svg></span><span class="tbk"><svg><use href="#rc"/></svg></span><span class="tbk"><svg><use href="#sq"/></svg></span><span class="tbk"><svg><use href="#cir"/></svg></span><span class="tbk"><svg><use href="#arc"/></svg></span><span class="tbk"><svg><use href="#arc3"/></svg></span><span class="tbk"><svg><use href="#cl"/></svg></span><span class="tbk"><svg><use href="#dm"/></svg></span><span class="tbk"><svg><use href="#dv"/></svg></span>
      <span class="tbsep" style="width:10px"></span>
      <span class="tbk" style="width:23px"><svg><use href="#lw"/></svg></span>
      <span class="d-flex justify-content-center" style="width:14px"><span class="tri"></span></span>
      <div class="combo d-flex align-items-center" style="width:58px;color:#555;padding-left:3px">0.1 mm<span class="drop flex-column" style="width:10px;gap:2px"><span class="tri" style="transform:scaleY(-1)"></span><span class="tri"></span></span></div>
      <div class="combo d-flex align-items-center" style="width:109px;margin-left:7px"><svg width="86" height="3" style="margin-left:3px"><path d="M0 1.500h86" stroke="#111"/></svg><span class="drop" style="width:10px"><span class="tri"></span></span></div>
      <span class="tbsep" style="width:8.500px"></span>
      <span class="tbk"><svg><use href="#g1"/></svg></span><span class="tbk"><svg><use href="#g2"/></svg></span><span class="tbk"><svg><use href="#g3"/></svg></span><span class="tbk"><svg><use href="#g4"/></svg></span><span class="tbk"><svg><use href="#g5"/></svg></span>
      <span class="tbsep"></span>
      <span class="tbk"><svg><use href="#o1"/></svg></span><span class="tbk"><svg><use href="#o2"/></svg></span><span class="tbk"><svg><use href="#o3"/></svg></span><span class="tbk"><svg><use href="#o4"/></svg></span><span class="tbk"><svg><use href="#edt"/></svg></span>
      <span class="tbend" style="margin-left:4px"><span class="tri"></span></span>
    </div>
    <div class="tbar d-flex align-items-center" style="margin-left:5px">
      <span class="grip"></span>
      <span class="tbk fs-5 fw-bold" style="color:#222;font-family:'Liberation Serif',serif">A</span>
      <div class="combo d-flex align-items-center" style="width:137px;color:#444;padding-left:5px">Arial<span class="drop"><span class="tri"></span></span></div>
      <div class="combo d-flex align-items-center" style="width:60px;margin-left:5px;color:#555;padding-left:5px">2.5 mm<span class="drop"><span class="tri"></span></span></div>
      <span class="tbk" style="margin-left:3.500px"><svg viewBox="0 0 20 20"><text x="10" y="14" text-anchor="middle" font-family="Liberation Sans" font-weight="700" font-size="14" fill="#2a3580">A</text><rect x="2" y="15" width="16" height="3.500" fill="#111"/></svg></span>
      <span class="d-flex justify-content-center" style="width:10.500px"><span class="tri"></span></span>
      <span class="tbk fw-bold" style="font-family:'Liberation Serif',serif;font-size:14px;color:#222">B</span><span class="tbk fst-italic fw-bold" style="font-family:'Liberation Serif',serif;font-size:14px;color:#222">I</span><span class="tbk fw-bold text-decoration-underline" style="font-family:'Liberation Serif',serif;font-size:14px;color:#2a3060">U</span>
      <span class="tbsep"></span>
      <span class="tbk on"><svg><use href="#lt"/></svg></span><span class="tbk"><svg><use href="#ct"/></svg></span><span class="tbk"><svg><use href="#rt"/></svg></span>
      <span class="tbend" style="margin-left:3px"><span class="tri"></span></span>
    </div>
    <span class="edge" style="top:0;bottom:0"></span>
  </div>
  <div class="status d-flex align-items-center">
    <span>Ready</span>
    <div class="ms-auto d-flex" style="width:212px">
      <span class="sc" style="width:100px;text-align:left;padding-left:5px">298.941,91.721</span>
      <span class="sc" style="width:29px">MM</span>
      <span class="sc" style="width:25px;color:#9fb0c6">CAP</span>
      <span class="sc" style="width:30px">NUM</span>
      <span class="sc" style="width:28px;color:#9fb0c6;font-size:9.500px;letter-spacing:-.2px">SCRL</span>
    </div>
  </div>
</div>
</body>
</html>
